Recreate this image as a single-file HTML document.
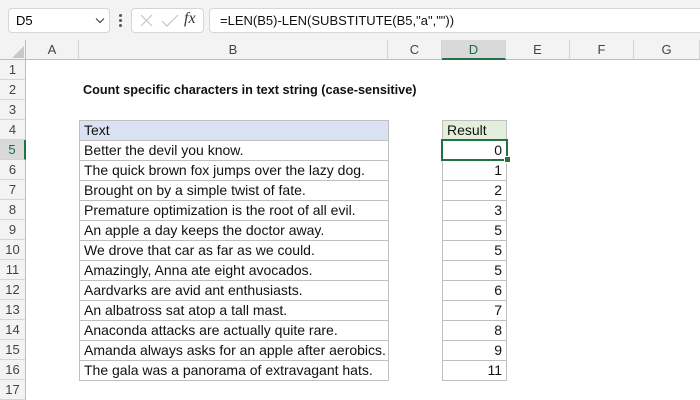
<!DOCTYPE html>
<html><head><style>
body{margin:0;width:700px;height:400px;overflow:hidden;background:#fff;font-family:"Liberation Sans",Calibri,sans-serif;position:relative}
.a{position:absolute;box-sizing:border-box}
.tb{left:0;top:0;width:700px;height:40px;background:#f3f3f3}
.box{background:#fff;border:1px solid #d6d6d6;border-radius:4px}
.ch{top:40px;height:20px;background:#f3f3f3;border-right:1px solid #d4d4d4;border-bottom:1px solid #bdbdbd;text-align:center;font-size:13px;line-height:20px;color:#444}
.rh{left:0;width:26px;height:20px;background:#f3f3f3;border-bottom:1px solid #d4d4d4;border-right:1px solid #bdbdbd;text-align:center;font-size:13px;line-height:20px;color:#444}
.c{box-sizing:border-box;height:21px;font-size:14px;line-height:19px;color:#111;white-space:nowrap;border:1px solid #bfbfbf;margin-top:-1px;padding-left:4px;overflow:hidden}
.n{text-align:right;padding:0 4px 0 0}
</style></head><body>
<div class="a tb"></div>
<div class="a box" style="left:8px;top:8px;width:102px;height:25px;font-size:13px;line-height:23px;padding-left:7px">D5</div>
<svg class="a" style="left:95px;top:17px" width="10" height="7"><path d="M1 1.5L5 5.5L9 1.5" fill="none" stroke="#444" stroke-width="1.2"/></svg>
<div class="a" style="left:119px;top:14px;width:3px;height:3px;background:#555;border-radius:2px"></div>
<div class="a" style="left:119px;top:19px;width:3px;height:3px;background:#555;border-radius:2px"></div>
<div class="a" style="left:119px;top:24px;width:3px;height:3px;background:#555;border-radius:2px"></div>
<div class="a box" style="left:131px;top:8px;width:73px;height:25px"></div>
<svg class="a" style="left:135px;top:12px" width="70" height="18"><path d="M6 3L17 14M17 3L6 14" stroke="#c4c4c4" stroke-width="1.2"/><path d="M27 9L32 14L43 3" fill="none" stroke="#c4c4c4" stroke-width="1.2"/></svg>
<div class="a" style="left:184px;top:10px;font-family:'Liberation Serif',serif;font-style:italic;font-size:16px;color:#333">fx</div>
<div class="a box" style="left:209px;top:8px;width:500px;height:25px;font-size:13px;line-height:23px;padding-left:10px;color:#111">=LEN(B5)-LEN(SUBSTITUTE(B5,"a",""))</div>
<div class="a" style="left:0;top:40px;width:26px;height:20px;background:#f3f3f3;border-right:1px solid #bdbdbd;border-bottom:1px solid #bdbdbd"></div>
<svg class="a" style="left:12px;top:46px" width="12" height="12"><path d="M12 0L12 12L0 12Z" fill="#c8c8c8"/></svg>
<div class="a ch" style="left:26px;width:53px">A</div>
<div class="a ch" style="left:79px;width:309px">B</div>
<div class="a ch" style="left:388px;width:54px">C</div>
<div class="a ch" style="left:442px;width:64px;background:#d9d9d9;border-bottom:2px solid #217346;color:#1e6b41">D</div>
<div class="a ch" style="left:506px;width:64px">E</div>
<div class="a ch" style="left:570px;width:64px">F</div>
<div class="a ch" style="left:634px;width:66px">G</div>
<div class="a rh" style="top:60px">1</div><div class="a rh" style="top:80px">2</div><div class="a rh" style="top:100px">3</div><div class="a rh" style="top:120px">4</div>
<div class="a rh" style="top:140px;background:#d9d9d9;border-right:2px solid #217346;color:#1e6b41">5</div>
<div class="a rh" style="top:160px">6</div><div class="a rh" style="top:180px">7</div><div class="a rh" style="top:200px">8</div><div class="a rh" style="top:220px">9</div><div class="a rh" style="top:240px">10</div><div class="a rh" style="top:260px">11</div><div class="a rh" style="top:280px">12</div><div class="a rh" style="top:300px">13</div><div class="a rh" style="top:320px">14</div><div class="a rh" style="top:340px">15</div><div class="a rh" style="top:360px">16</div><div class="a rh" style="top:380px">17</div>
<div class="a" style="left:83px;top:80px;font-size:12.7px;line-height:20px;font-weight:bold;color:#111">Count specific characters in text string (case-sensitive)</div>
<div class="a" style="left:79px;top:121px;width:310px">
<div class="c" style="background:#d9e1f2">Text</div>
<div class="c">Better the devil you know.</div>
<div class="c">The quick brown fox jumps over the lazy dog.</div>
<div class="c">Brought on by a simple twist of fate.</div>
<div class="c">Premature optimization is the root of all evil.</div>
<div class="c">An apple a day keeps the doctor away.</div>
<div class="c">We drove that car as far as we could.</div>
<div class="c">Amazingly, Anna ate eight avocados.</div>
<div class="c">Aardvarks are avid ant enthusiasts.</div>
<div class="c">An albatross sat atop a tall mast.</div>
<div class="c">Anaconda attacks are actually quite rare.</div>
<div class="c">Amanda always asks for an apple after aerobics.</div>
<div class="c">The gala was a panorama of extravagant hats.</div>
</div>
<div class="a" style="left:442px;top:121px;width:65px">
<div class="c" style="background:#e2efda">Result</div>
<div class="c n">0</div><div class="c n">1</div><div class="c n">2</div><div class="c n">3</div><div class="c n">5</div><div class="c n">5</div><div class="c n">5</div><div class="c n">6</div><div class="c n">7</div><div class="c n">8</div><div class="c n">9</div><div class="c n">11</div>
</div>
<div class="a" style="left:441px;top:139px;width:67px;height:22px;border:2px solid #217346"></div>
<div class="a" style="left:505px;top:157px;width:5px;height:5px;background:#217346;outline:1px solid #fff"></div>
</body></html>
